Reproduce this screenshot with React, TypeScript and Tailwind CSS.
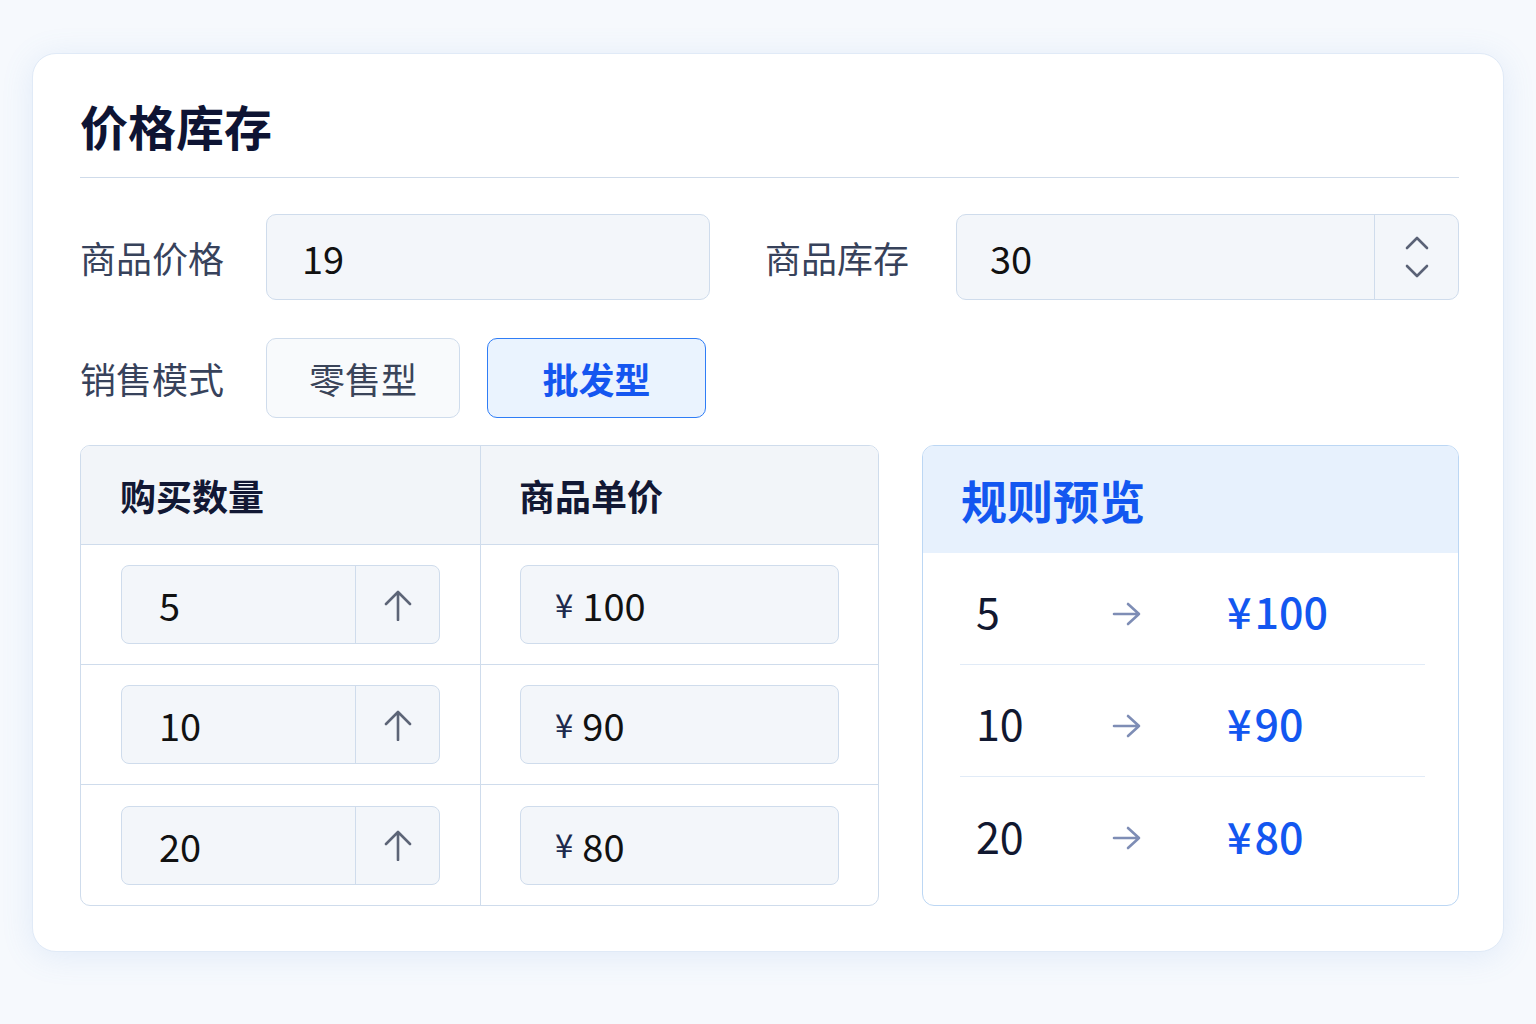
const tiers = [
  { qty: "5", price: "100" },
  { qty: "10", price: "90" },
  { qty: "20", price: "80" },
];

function Chevron({ down }: { down?: boolean }) {
  return (
    <svg width="24" height="14" viewBox="0 0 24 14" fill="none" className={down ? "rotate-180" : ""}>
      <path d="M2 12 12 2l10 10" stroke="#5a6276" strokeWidth="2.6" strokeLinecap="round" strokeLinejoin="round" />
    </svg>
  );
}

function ArrowUp() {
  return (
    <svg width="30" height="32" viewBox="0 0 30 32" fill="none">
      <path d="M15 3v28M3 15 15 3l12 12" stroke="#5d6577" strokeWidth="2.6" strokeLinecap="round" strokeLinejoin="round" />
    </svg>
  );
}

function ArrowRight() {
  return (
    <svg width="29" height="24" viewBox="0 0 29 24" fill="none" className="mt-[6px]">
      <path d="M2 12h25M16 2l11 10-11 10" stroke="#7e8db5" strokeWidth="2.6" strokeLinecap="round" strokeLinejoin="round" />
    </svg>
  );
}

export default function App() {
  return (
    <main className="min-h-screen bg-[#f6f9fd] px-8 pt-[53px] font-['Noto_Sans_CJK_SC',sans-serif]">
      <section className="w-[1472px] rounded-[24px] border border-[#e0eaf7] bg-white pb-[45px] pl-[47px] pr-[44px] pt-[35px] shadow-[0_4px_32px_rgba(100,150,220,0.14)]">
        <h1 className="border-b border-[#cfdbea] pb-4 text-[48px] font-bold leading-[72px] text-[#0e1433]">
          价格库存
        </h1>

        <div className="mt-9 flex h-[86px] items-center">
          <span className="w-[186px] text-[36px] text-[#37425b]">商品价格</span>
          <div className="flex h-[86px] w-[444px] items-center rounded-[10px] border border-[#cfdcec] bg-[#f3f6fa] pl-[35px] text-[38px] text-[#111]">
            19
          </div>
          <span className="ml-[55px] w-[191px] text-[36px] text-[#37425b]">商品库存</span>
          <div className="flex h-[86px] flex-1 rounded-[10px] border border-[#cfdcec] bg-[#f3f6fa]">
            <div className="flex flex-1 items-center pl-[33px] text-[38px] text-[#111]">30</div>
            <div className="flex w-[84px] flex-col items-center justify-center gap-[14px] border-l border-[#cfdcec]">
              <Chevron />
              <Chevron down />
            </div>
          </div>
        </div>

        <div className="mt-[38px] flex h-[80px] items-center">
          <span className="w-[186px] text-[36px] text-[#37425b]">销售模式</span>
          <div className="flex gap-[27px]">
            <div className="flex h-[80px] w-[194px] items-center justify-center rounded-[10px] border border-[#cfdcec] bg-[#f8fafc] text-[36px] text-[#3a4459]">
              零售型
            </div>
            <div className="flex h-[80px] w-[219px] items-center justify-center rounded-[10px] border border-[#2f7df6] bg-[#eaf3fe] text-[36px] font-semibold text-[#1556f0]">
              批发型
            </div>
          </div>
        </div>

        <div className="mt-[27px] flex gap-[43px]">
          <div className="w-[799px] overflow-hidden rounded-[10px] border border-[#cfdcec]">
            <div className="grid h-[99px] grid-cols-[400px_1fr] border-b border-[#cfdcec] bg-[#f2f5f9] text-[36px] font-semibold text-[#121834]">
              <div className="flex items-center border-r border-[#cfdcec] pl-[39px]">购买数量</div>
              <div className="flex items-center pl-[38px]">商品单价</div>
            </div>
            {tiers.map((t, i) => (
              <div
                key={t.qty}
                className={`grid h-[120px] grid-cols-[400px_1fr] ${i < tiers.length - 1 ? "border-b border-[#cfdcec]" : ""}`}
              >
                <div className="flex items-center border-r border-[#cfdcec] px-[40px]">
                  <div className="flex h-[79px] flex-1 rounded-[8px] border border-[#cfdcec] bg-[#f3f6fa]">
                    <div className="flex flex-1 items-center pl-[37px] text-[38px] text-[#111]">{t.qty}</div>
                    <div className="flex w-[84px] items-center justify-center border-l border-[#cfdcec]">
                      <ArrowUp />
                    </div>
                  </div>
                </div>
                <div className="flex items-center px-[39px]">
                  <div className="flex h-[79px] flex-1 items-center rounded-[8px] border border-[#cfdcec] bg-[#f3f6fa] pl-[34px] text-[38px] text-[#111]">
                    <span className="mr-[9px] text-[33px] text-[#1d2a4d]">¥</span>
                    {t.price}
                  </div>
                </div>
              </div>
            ))}
          </div>

          <div className="flex-1 overflow-hidden rounded-[12px] border border-[#bcd7f4]">
            <div className="flex h-[107px] items-center bg-[#e7f1fd] pl-[38px] text-[46px] font-bold text-[#1357f0]">
              规则预览
            </div>
            <div className="pl-[37px] pr-[33px]">
              {tiers.map((t, i) => (
                <div
                  key={t.qty}
                  className={`grid h-[112px] grid-cols-[136px_115px_1fr] items-center pl-[16px] pt-[4px] ${i < tiers.length - 1 ? "border-b border-[#e1ebf7]" : ""}`}
                >
                  <span className="text-[43px] text-[#111830]">{t.qty}</span>
                  <ArrowRight />
                  <span className="text-[43px] font-medium text-[#1357f0]">
                    ¥<span className="ml-[3px]">{t.price}</span>
                  </span>
                </div>
              ))}
            </div>
          </div>
        </div>
      </section>
    </main>
  );
}
